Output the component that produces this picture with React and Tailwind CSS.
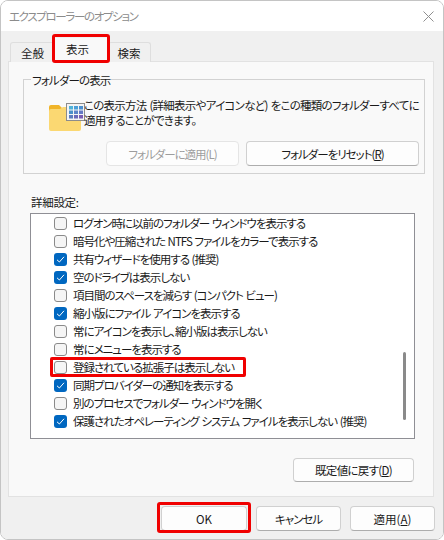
const rows = [
  { label: 'ログオン時に以前のフォルダー ウィンドウを表示する', checked: false },
  { label: '暗号化や圧縮された NTFS ファイルをカラーで表示する', checked: false },
  { label: '共有ウィザードを使用する (推奨)', checked: true },
  { label: '空のドライブは表示しない', checked: true },
  { label: '項目間のスペースを減らす (コンパクト ビュー)', checked: false },
  { label: '縮小版にファイル アイコンを表示する', checked: true },
  { label: '常にアイコンを表示し、縮小版は表示しない', checked: false },
  { label: '常にメニューを表示する', checked: false },
  { label: '登録されている拡張子は表示しない', checked: false, marked: true },
  { label: '同期プロバイダーの通知を表示する', checked: true },
  { label: '別のプロセスでフォルダー ウィンドウを開く', checked: false },
  { label: '保護されたオペレーティング システム ファイルを表示しない (推奨)', checked: true },
];

function FolderIcon() {
  return (
    <svg width="36" height="30" viewBox="0 0 36 30" className="shrink-0">
      <path d="M0 4a2 2 0 0 1 2-2h8l3 3v4H0z" fill="#f0b429" />
      <path d="M0 8a2 2 0 0 1 2-2h9l3-2h16a2 2 0 0 1 2 2v20a2 2 0 0 1-2 2H2a2 2 0 0 1-2-2z" fill="#fbd872" />
      <rect x="17.5" y="0.5" width="18" height="17" fill="#f4f4f4" stroke="#8c8c8c" />
      <rect x="20" y="3" width="4" height="3.5" fill="#4fb3d9" />
      <rect x="25" y="3" width="4" height="3.5" fill="#4a9fd8" />
      <rect x="30" y="3" width="4" height="3.5" fill="#4a8fd0" />
      <rect x="20" y="7.5" width="4" height="3.5" fill="#4a90c8" />
      <rect x="25" y="7.5" width="4" height="3.5" fill="#5c84c8" />
      <rect x="30" y="7.5" width="4" height="3.5" fill="#6478c4" />
      <rect x="20" y="12" width="4" height="3.5" fill="#5c7cc0" />
      <rect x="25" y="12" width="4" height="3.5" fill="#6a68b8" />
      <rect x="30" y="12" width="4" height="3.5" fill="#7a5cb4" />
    </svg>
  );
}

function CheckBox({ checked }) {
  if (checked) {
    return (
      <span className="w-[13px] h-[13px] rounded-[3px] bg-[#0067c0] flex items-center justify-center shrink-0">
        <svg width="9" height="9" viewBox="0 0 9 9" fill="none">
          <path d="M1 4.8 3.4 7 8 1.8" stroke="#ffffff" strokeWidth="1" />
        </svg>
      </span>
    );
  }
  return <span className="w-[13px] h-[13px] rounded-[3px] border border-[#8a8a8a] bg-[#f5f5f5] shrink-0" />;
}

function Button({ className, disabled, children }) {
  return (
    <div
      className={`h-[25px] rounded-[4px] border flex items-center justify-center bg-[#fdfdfd] ${
        disabled ? 'border-[#e5e5e5] text-[#9d9d9d]' : 'border-[#d0d0d0] border-b-[#adadad] text-[#1a1a1a]'
      } ${className}`}
    >
      {children}
    </div>
  );
}

export default function App() {
  return (
    <div
      className="w-[444px] h-[540px] bg-white text-[11.5px] leading-[16px] text-[#1a1a1a] overflow-hidden [font-feature-settings:'palt'] tracking-[-1px] [word-spacing:1px]"
      style={{ fontFamily: '"Noto Sans CJK JP", "Noto Sans", sans-serif' }}
    >
      <div className="h-full rounded-lg border border-[#c4c4c4] flex flex-col overflow-hidden">
        {/* Title bar */}
        <div className="h-[30px] bg-white flex items-center justify-between pl-[8px] pr-[9px] shrink-0">
          <span className="text-[#8c8c8c] tracking-[-1.35px]">エクスプローラーのオプション</span>
          <svg width="11" height="11" viewBox="0 0 11 11" fill="none">
            <path d="M.5.5l10 10M10.5.5l-10 10" stroke="#8f8f8f" />
          </svg>
        </div>

        <div className="flex-1 bg-[#f0f0f0] flex flex-col px-[7px]">
          {/* Tabs */}
          <div className="flex items-end h-[30px] pl-[2px] shrink-0 relative z-10 tracking-normal">
            <div className="w-[45px] h-[20px] mb-[-1px] bg-[#f0f0f0] border border-b-0 border-[#dedede] rounded-t-[3px] flex items-center justify-center">全般</div>
            <div className="relative w-[53px] h-[24px] mb-[-1px] bg-[#f9f9f9] flex items-center pl-[11px] pb-[3px]">
              表示
              <div className="absolute left-[-3px] top-[-4px] w-[58px] h-[29px] border-[3px] border-[#f00000] rounded-[3px]" />
            </div>
            <div className="w-[43px] h-[20px] mb-[-1px] bg-[#f0f0f0] border border-b-0 border-l-0 border-[#dedede] rounded-t-[3px] flex items-center justify-center">検索</div>
          </div>

          {/* Tab panel */}
          <div className="w-[426px] h-[436px] bg-[#f9f9f9] border border-[#e2e2e2] flex flex-col pt-[17px] shrink-0">
            <div className="relative ml-[14px] w-[402px] h-[95px] border border-[#d2d2d2] flex flex-col shrink-0">
              <span className="absolute left-[7px] top-[-8px] bg-[#f9f9f9] px-[1px] tracking-[-0.85px]">フォルダーの表示</span>
              <div className="flex items-start pl-[25px] pt-[23px]">
                <FolderIcon />
                <p className="ml-[-1px] -mt-[5px] leading-[15px] whitespace-nowrap tracking-[-0.74px]">
                  この表示方法 (詳細表示やアイコンなど) をこの種類のフォルダーすべてに
                  <br />
                  適用することができます。
                </p>
              </div>
              <div className="flex justify-end gap-[7px] pr-[5px] mt-[8px]">
                <Button disabled className="w-[133px]">フォルダーに適用(L)</Button>
                <Button className="w-[173px]">
                  <span>フォルダーをリセット(<span className="underline">R</span>)</span>
                </Button>
              </div>
            </div>

            <div className="ml-[22px] mt-[20px] h-[16px] tracking-[-0.3px]">詳細設定:</div>
            <div className="relative ml-[21px] mt-[3px] w-[385px] h-[226px] bg-white border border-[#8f8f95] shrink-0">
              {rows.map((row) => (
                <div key={row.label} className="relative h-[18px] flex items-center pl-[23px] whitespace-nowrap">
                  <CheckBox checked={row.checked} />
                  <span className="ml-[6px]">{row.label}</span>
                  {row.marked && (
                    <div className="absolute left-[19px] top-[-1px] w-[196px] h-[20px] border-[3px] border-[#f00000] rounded-[2px]" />
                  )}
                </div>
              ))}
              <div className="absolute right-[8px] top-[138px] w-[3px] h-[68px] rounded-full bg-[#8a8a8a]" />
            </div>

            <div className="flex justify-end pr-[19px] mt-[19px]">
              <Button className="w-[121px] !h-[24px] tracking-[-0.7px]">
                <span>既定値に戻す(<span className="underline">D</span>)</span>
              </Button>
            </div>
          </div>

          {/* Footer buttons */}
          <div className="flex justify-end gap-[9px] pt-[9px] pr-[1px]">
            <div className="relative">
              <Button className="w-[86px] tracking-normal">OK</Button>
              <div className="absolute left-[-4px] top-[-4px] w-[94px] h-[31px] border-[3px] border-[#f00000] rounded-[3px]" />
            </div>
            <Button className="w-[85px]">キャンセル</Button>
            <Button className="w-[85px] tracking-normal">
              <span>適用(<span className="underline">A</span>)</span>
            </Button>
          </div>
        </div>
      </div>
    </div>
  );
}
